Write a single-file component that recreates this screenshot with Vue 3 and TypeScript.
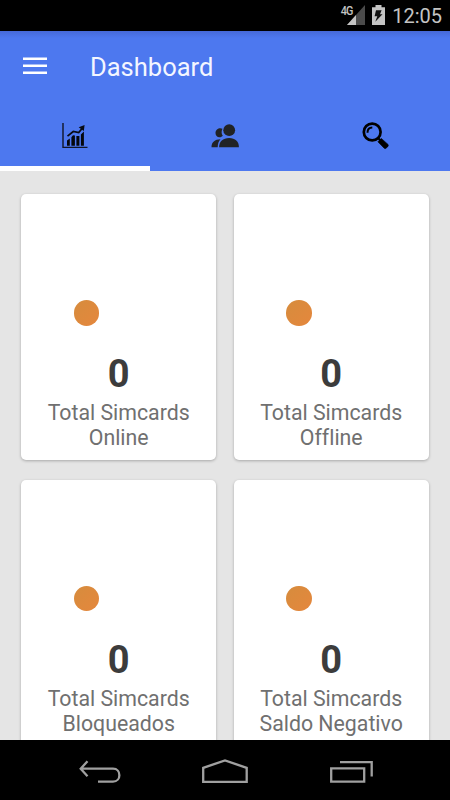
<script setup lang="ts">
interface Stat {
  value: number
  first: string
  second: string
}

const stats: Stat[] = [
  { value: 0, first: 'Total Simcards', second: 'Online' },
  { value: 0, first: 'Total Simcards', second: 'Offline' },
  { value: 0, first: 'Total Simcards', second: 'Bloqueados' },
  { value: 0, first: 'Total Simcards', second: 'Saldo Negativo' },
]
</script>

<template>
  <div class="screen">
    <div class="status">
      <span class="network">4G</span>
      <svg class="signal" width="18" height="21" viewBox="0 0 18 21">
        <path d="M0 21 18 1V21Z" fill="#4b4b4b" />
        <path d="M0 21 9 11V21Z" fill="#c4c4c4" />
      </svg>
      <svg class="battery" width="13" height="20" viewBox="0 0 13 20">
        <path d="M0 2.2H3.5V0H9.5V2.2H13V20H0Z" fill="#c4c4c4" />
        <path d="M4 5.3H9.6L8 9.3H10.5L3.3 16.8 5.3 11.3H2.6Z" fill="#111" />
      </svg>
      <span class="clock">12:05</span>
    </div>

    <header class="header">
      <div class="toolbar">
        <svg class="menu" width="24" height="18" viewBox="0 0 24 18">
          <path d="M0 1.8H24M0 8.8H24M0 15.7H24" stroke="#fff" stroke-width="2.6" />
        </svg>
        <h1 class="title">Dashboard</h1>
      </div>
      <nav class="tabs">
        <button class="tab active" aria-label="Dashboard">
          <svg width="26" height="26" viewBox="0 0 26 26">
            <path d="M1 0V24.4H25.5" fill="none" stroke="#101525" stroke-width="1.4" />
            <path d="M5 17.5 7.8 15.5V22.7H5ZM9.4 14.2 11 12.3 12.9 12.5V22.7H9.4ZM14.4 12.9 17.4 13V22.7H14.4ZM18.9 11.5 21.9 8.4V22.7H18.9Z" fill="#05070c" />
            <path d="M5.5 13.2 11.3 8.5 16.7 9.5 20.5 5" fill="none" stroke="#080b14" stroke-width="1.7" />
            <path d="M16.7 4.2 22.6 2 21.8 8Z" fill="#080b14" />
          </svg>
        </button>
        <button class="tab" aria-label="Clientes">
          <svg width="28" height="24" viewBox="-0.5 0 28 24">
            <g fill="#212326">
              <path d="M11 4.8C8.3 3 4 5.1 4 9c0 2.4 1.6 4.2 4 4.3 1.5 0 2.5-.6 3.3-1.5C9.8 10 9.8 7 11 4.8Z" />
              <path d="M0 23.2C0 18.3 3.2 15.4 9 15.3 7.3 17.2 6.3 19.6 6.2 23.2Z" />
              <circle cx="17.7" cy="6.2" r="5.9" />
              <path d="M7.6 23.2c0-5.5 3.8-9.1 10-9.1s9.8 3.6 9.8 9.1Z" />
            </g>
          </svg>
        </button>
        <button class="tab" aria-label="Pesquisar">
          <svg width="28" height="28" viewBox="0 0 28 28">
            <circle cx="11.2" cy="10" r="8.4" fill="none" stroke="#000" stroke-width="2.7" />
            <path d="M6.5 10.7C6.5 7.5 8.3 5.7 11.3 5.6" fill="none" stroke="#000" stroke-width="2" />
            <path d="m16.8 15.8 3 3" stroke="#000" stroke-width="2" />
            <path d="M20.3 16.4 27 22.4Q27.7 23.2 27 24.2L25.2 26.2Q24.2 27 23.2 26.2L16.9 19.8Z" fill="#000" stroke="#000" stroke-width=".6" stroke-linejoin="round" />
          </svg>
        </button>
      </nav>
    </header>

    <main class="content">
      <section v-for="stat in stats" :key="stat.second" class="card">
        <div class="chart"><i class="dot"></i></div>
        <strong class="value">{{ stat.value }}</strong>
        <p class="label">{{ stat.first }}<br />{{ stat.second }}</p>
      </section>
    </main>

    <footer class="navbar">
      <svg width="42" height="24" viewBox="0 0 42 24" fill="none" stroke="#a0a0a0" stroke-width="2.3">
        <path d="M8.5 1.2 1.7 8.7 8.5 16.2M1.7 8.7H34C42.5 8.7 42.5 21.6 34 21.6H19" />
      </svg>
      <svg class="home" width="46" height="26" viewBox="0 0 46 26" fill="none" stroke="#a0a0a0" stroke-width="2.3">
        <path d="M1.2 22.9V8.8L23 1.4 44.7 8.8V22.9Z" />
      </svg>
      <svg width="43" height="24" viewBox="0 0 43 24" fill="none" stroke="#a0a0a0" stroke-width="2.3">
        <path d="M1.2 8.3H34.2V21.6H1.2ZM10 2.2H41.7V16.5" />
      </svg>
    </footer>
  </div>
</template>

<style>
body {
  background: #000;
  overflow: hidden;
}
</style>

<style scoped>
.screen {
  display: flex;
  flex-direction: column;
  width: 450px;
  height: 800px;
  overflow: hidden;
  background: #e5e5e5;
  font-family: Roboto, "Liberation Sans", sans-serif;
}
.status {
  display: flex;
  flex: none;
  justify-content: flex-end;
  align-items: flex-start;
  height: 31px;
  padding-right: 8px;
  box-sizing: border-box;
  background: #000;
  color: #c4c4c4;
}
.network {
  margin: 5px -7px 0 0;
  font-size: 12px;
  font-weight: 500;
  line-height: 13px;
  letter-spacing: -0.8px;
  transform: scaleX(0.9);
  z-index: 1;
}
.signal {
  margin-top: 4px;
}
.battery {
  margin: 5px 8px 0 7px;
}
.clock {
  font-size: 20px;
  line-height: 24px;
  margin: 4px 0 0 -0.7px;
}
.header {
  flex: none;
  height: 140px;
  background: linear-gradient(#4669d8, #4d78ef 7px);
}
.toolbar {
  display: flex;
  align-items: center;
  height: 70px;
  padding-left: 23px;
}
.title {
  margin: 2px 0 0 43px;
  color: #f3f6ff;
  font-size: 25.5px;
  font-weight: 400;
  line-height: 30px;
}
.tabs {
  display: flex;
  height: 70px;
}
.tab {
  display: flex;
  flex: 1;
  align-items: center;
  justify-content: center;
  padding: 5px 0 0;
  border: 0;
  border-bottom: 5px solid transparent;
  background: none;
}
.tab.active {
  border-bottom-color: #fff;
}
.content {
  display: grid;
  flex: 1;
  min-height: 0;
  grid-template-columns: 195px 195px;
  grid-auto-rows: 265.5px;
  align-content: start;
  gap: 20px 17.5px;
  padding: 23px 21.2px 0;
  overflow: hidden;
}
.card {
  display: flex;
  flex-direction: column;
  align-items: center;
  border-radius: 5px;
  background: #fff;
  box-shadow: 0 1px 3px rgba(0, 0, 0, 0.27);
}
.chart {
  width: 100%;
  height: 157px;
}
.dot {
  display: block;
  width: 25.5px;
  height: 25.5px;
  margin: 106px 0 0 52.5px;
  border-radius: 50%;
  background: linear-gradient(135deg, #d68c3d, #e5873d);
}
.value {
  color: #3c3c3c;
  font-size: 38px;
  font-weight: 700;
  line-height: 46px;
}
.label {
  margin: 3px 0 0;
  color: #707070;
  font-size: 21.3px;
  line-height: 25px;
  text-align: center;
  white-space: nowrap;
  font-variant-ligatures: none;
}
.navbar {
  display: flex;
  flex: none;
  align-items: center;
  justify-content: space-between;
  height: 60px;
  padding: 3px 77px 0 79px;
  box-sizing: border-box;
  background: #000;
}
.home {
  margin-right: 1.5px;
}
</style>
